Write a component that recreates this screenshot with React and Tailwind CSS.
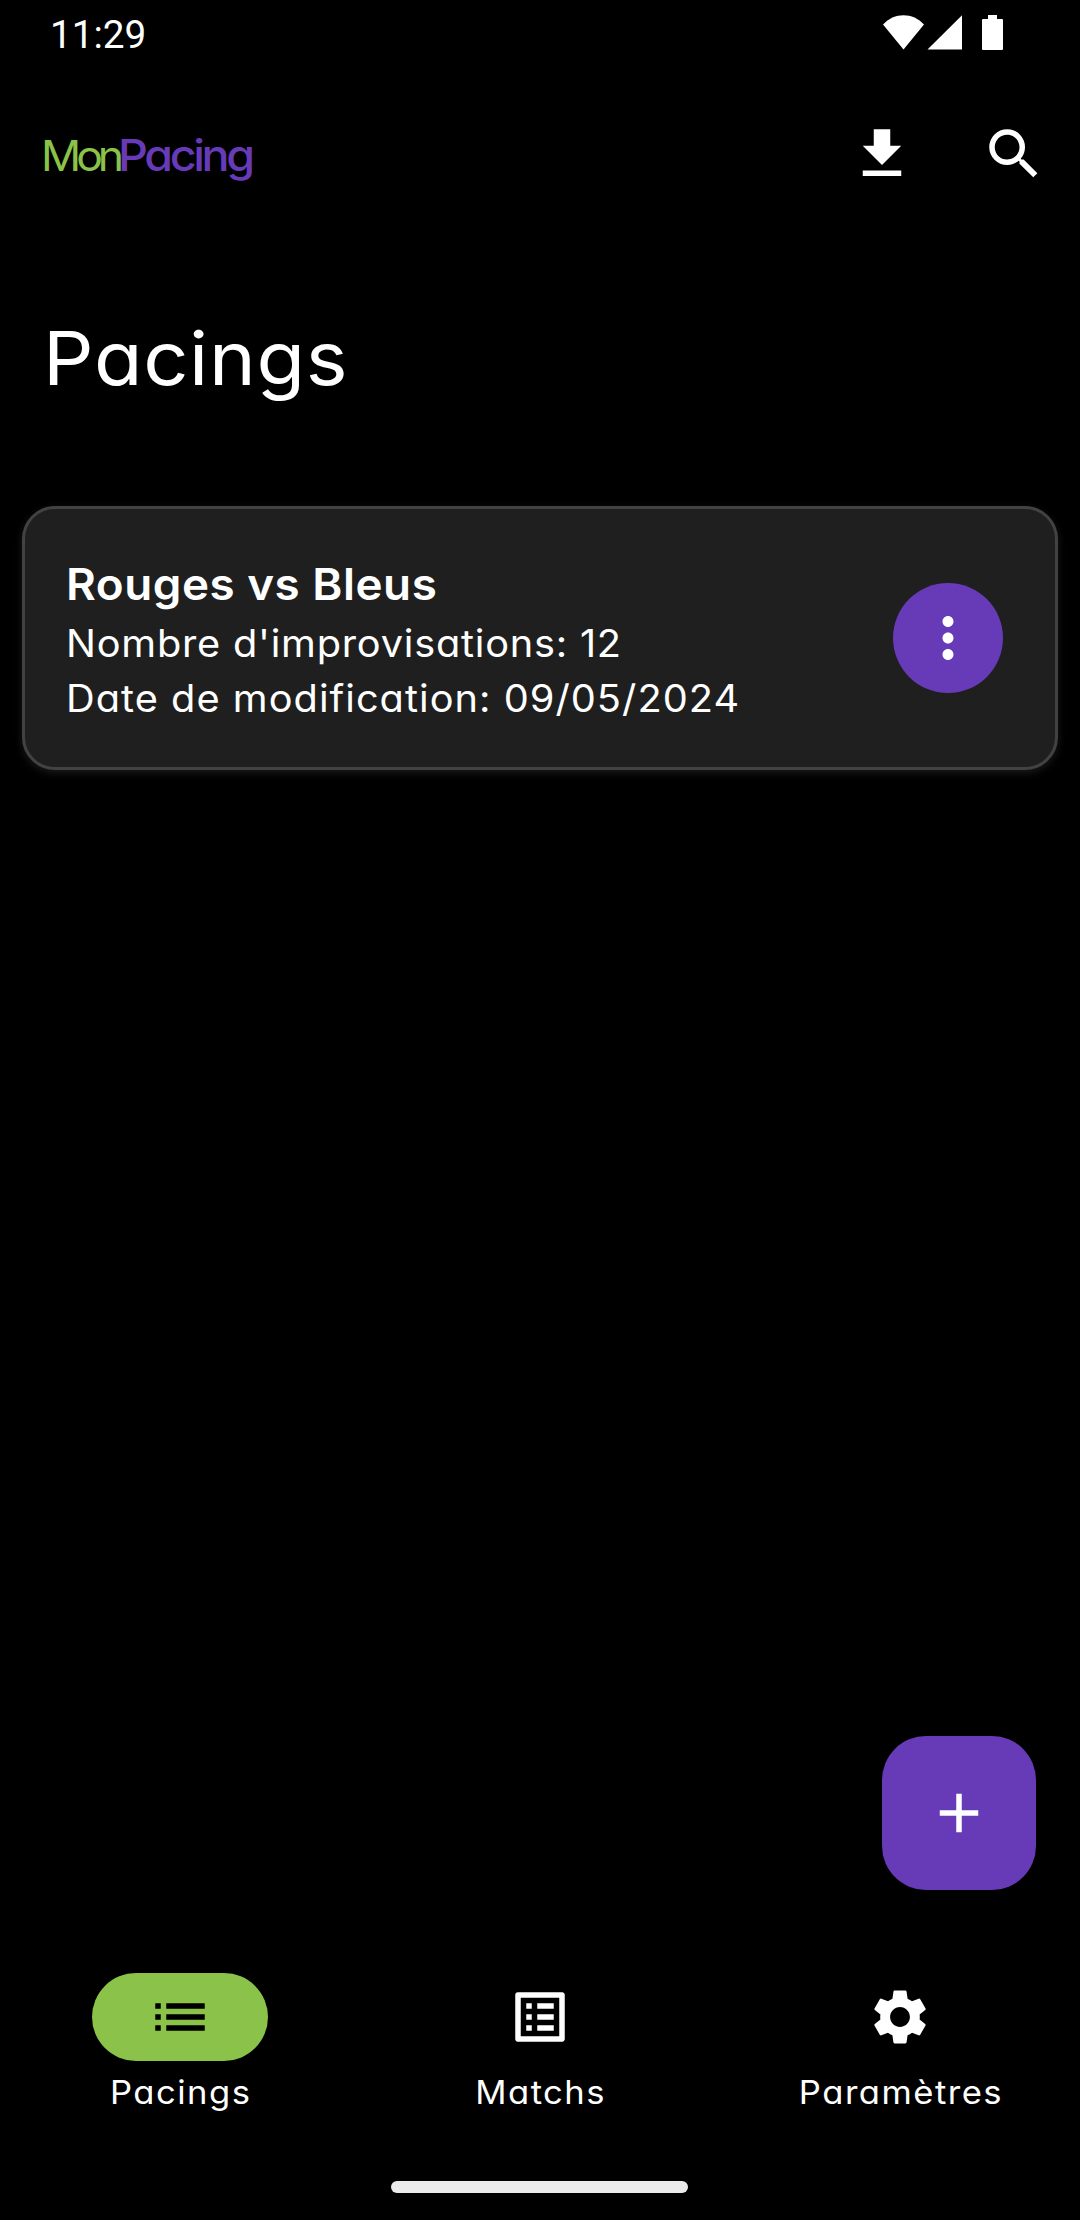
import React from "react";
import { MdAdd, MdList, MdListAlt, MdMoreVert, MdSearch, MdSettings } from "react-icons/md";

function StatusBar() {
  return (
    <div className="flex h-[66px] shrink-0 items-start justify-between pl-[50px] pr-[77px]">
      <span className="pt-[2px] font-['Roboto',sans-serif] text-[38.7px] leading-[66px]">11:29</span>
      <svg className="mt-[12px] h-[40px] w-[122px]" viewBox="881 12 122 40" fill="currentColor">
        <path d="M903.5 49.5 883 24.5C894 12 913 12 924 24.5Z" />
        <path d="M927.5 49.5H962V15.3Z" />
        <path d="M988 15h9v4h5a1 1 0 0 1 1 1v29a1 1 0 0 1-1 1h-19a1 1 0 0 1-1-1V20a1 1 0 0 1 1-1h5Z" />
      </svg>
    </div>
  );
}

function TopBar() {
  return (
    <header className="flex h-[176px] shrink-0 items-center justify-between pl-[41.3px] pr-[33px]">
      <div className="flex items-baseline pt-[2px] leading-[66px]">
        <span className="origin-left scale-x-[1.06] text-[42px] tracking-[-4.8px] text-[#8bc34a]">Mon</span>
        <span className="ml-[3.5px] origin-left scale-x-[1.06] text-[44px] font-medium tracking-[-3.2px] text-[#673ab7]">
          Pacing
        </span>
      </div>
      <div className="flex gap-[66px]">
        <svg className="size-[66px]" viewBox="0 0 24 24" fill="currentColor">
          <path d="M19 9h-4V3H9v6H5l7 7 7-7zM5 18v2h14v-2H5z" />
        </svg>
        <MdSearch className="size-[66px]" />
      </div>
    </header>
  );
}

function PacingCard() {
  return (
    <article className="mx-[22px] mt-[94px] flex h-[264px] shrink-0 items-center justify-between rounded-[33px] border-[3px] border-[#424242] bg-[#1f1f1f] pl-[40.5px] pr-[52px] shadow-[0_3px_8px_rgba(255,255,255,0.1)]">
      <div className="pt-[2px] text-[37.5px] leading-[55px]">
        <h2 className="origin-left scale-x-[1.04] text-[44px] font-semibold leading-[64px] tracking-[0.51px]">
          Rouges vs Bleus
        </h2>
        <p className="origin-left scale-x-[1.06] tracking-[0.72px]">Nombre d'improvisations: 12</p>
        <p className="origin-left scale-x-[1.06] tracking-[0.96px]">Date de modification: 09/05/2024</p>
      </div>
      <button className="flex size-[110px] items-center justify-center rounded-full bg-[#673ab7]">
        <MdMoreVert className="size-[66px]" />
      </button>
    </article>
  );
}

function NavItem({ icon: Icon, label, active }) {
  return (
    <div className="flex flex-col items-center">
      <div
        className={
          active
            ? "flex h-[88px] w-[176px] items-center justify-center rounded-full bg-[#8bc34a] text-black"
            : "flex h-[88px] w-[176px] items-center justify-center"
        }
      >
        <Icon className="size-[66px]" />
      </div>
      <span className="mt-[10px] scale-x-[1.07] pl-[1.5px] text-[32.3px] leading-[44px] tracking-[1.4px]">{label}</span>
    </div>
  );
}

export default function App() {
  return (
    <div className="relative flex h-[2220px] w-[1080px] flex-col overflow-hidden bg-black font-['Inter',sans-serif] text-white [font-feature-settings:'cv11']">
      <StatusBar />
      <TopBar />
      <h1 className="ml-[43px] mt-[62px] origin-left scale-x-[1.07] text-[74px] leading-[108px] tracking-[0.7px]">
        Pacings
      </h1>
      <PacingCard />
      <button className="absolute right-[44px] top-[1736px] flex size-[154px] items-center justify-center rounded-[44px] bg-[#673ab7]">
        <MdAdd className="size-[66px]" />
      </button>
      <nav className="mt-auto grid shrink-0 grid-cols-3">
        <NavItem icon={MdList} label="Pacings" active />
        <NavItem icon={MdListAlt} label="Matchs" />
        <NavItem icon={MdSettings} label="Paramètres" />
      </nav>
      <div className="mb-[27px] ml-[391px] mt-[66px] h-[12px] w-[297px] shrink-0 rounded-[6px] bg-[#ebebeb]" />
    </div>
  );
}
